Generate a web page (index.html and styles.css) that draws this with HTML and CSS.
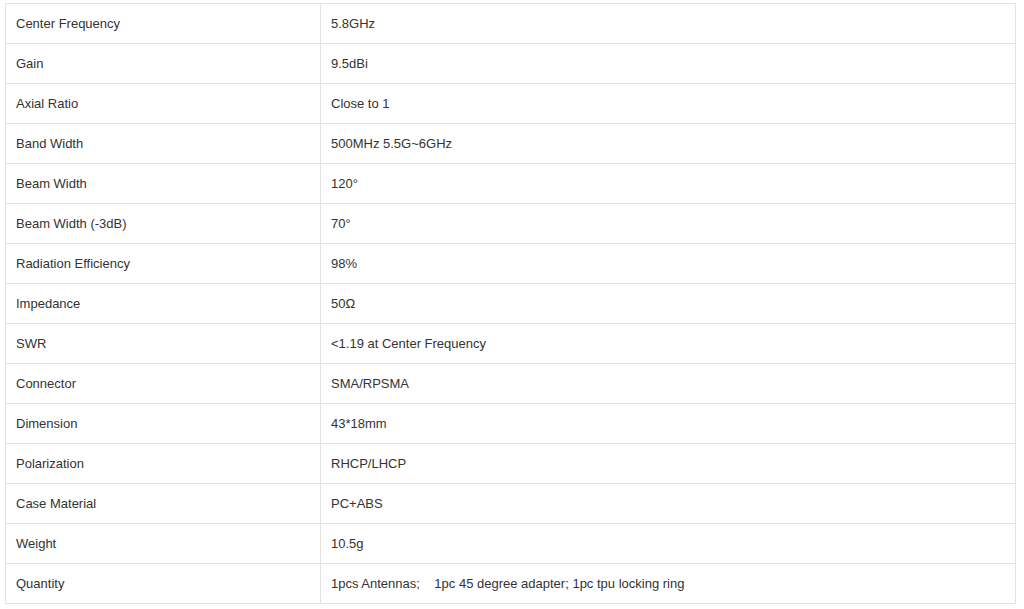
FILE: index.html
```html
<!DOCTYPE html>
<html>
<head>
<meta charset="utf-8">
<link rel="stylesheet" href="styles.css">
</head>
<body>
<div class="wrap">
<table class="spec">
<tbody>
<tr><td class="k">Center Frequency</td><td class="v">5.8GHz</td></tr>
<tr><td class="k">Gain</td><td class="v">9.5dBi</td></tr>
<tr><td class="k">Axial Ratio</td><td class="v">Close to 1</td></tr>
<tr><td class="k">Band Width</td><td class="v">500MHz 5.5G~6GHz</td></tr>
<tr><td class="k">Beam Width</td><td class="v">120°</td></tr>
<tr><td class="k">Beam Width (-3dB)</td><td class="v">70°</td></tr>
<tr><td class="k">Radiation Efficiency</td><td class="v">98%</td></tr>
<tr><td class="k">Impedance</td><td class="v">50Ω</td></tr>
<tr><td class="k">SWR</td><td class="v">&lt;1.19 at Center Frequency</td></tr>
<tr><td class="k">Connector</td><td class="v">SMA/RPSMA</td></tr>
<tr><td class="k">Dimension</td><td class="v">43*18mm</td></tr>
<tr><td class="k">Polarization</td><td class="v">RHCP/LHCP</td></tr>
<tr><td class="k">Case Material</td><td class="v">PC+ABS</td></tr>
<tr><td class="k">Weight</td><td class="v">10.5g</td></tr>
<tr><td class="k">Quantity</td><td class="v">1pcs Antennas;&nbsp;&nbsp;&nbsp; 1pc 45 degree adapter; 1pc tpu locking ring</td></tr>
</tbody>
</table>
</div>
</body>
</html>
```
FILE: styles.css
```css
html, body {
  margin: 0;
  padding: 0;
  background: #ffffff;
}
.wrap {
  padding: 3px 0 0 5px;
}
.spec {
  border-collapse: collapse;
  width: 1011px;
  table-layout: fixed;
  font-family: "Liberation Sans", Arial, sans-serif;
  font-size: 13px;
  color: #333333;
}
.spec td {
  border: 1px solid #e3e3e3;
  height: 40px;
  padding: 0 0 0 10px;
  vertical-align: middle;
  box-sizing: border-box;
}
.spec td.k {
  width: 315px;
}
```
